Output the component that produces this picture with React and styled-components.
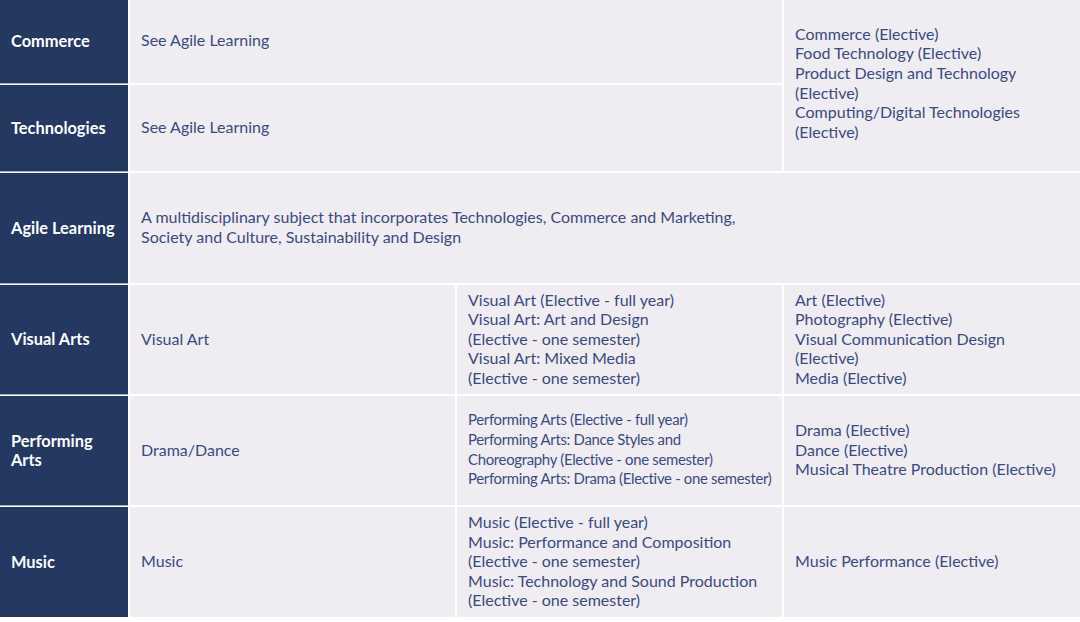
import React from 'react';
import styled, { createGlobalStyle } from 'styled-components';

const GlobalStyle = createGlobalStyle`
  body {
    margin: 0;
    background: #ffffff;
    font-family: Lato, "Open Sans", sans-serif;
  }
`

const Table = styled.div`
  display: grid;
  grid-template-columns: 128px 325px 325px 1fr;
  grid-template-rows: 83px 86px 110px 109px 109px 110px;
  gap: 2px;
  background: #ffffff;
  width: 1080px;
`

const Heading = styled.div`
  background: #243862;
  color: #ffffff;
  font-weight: 700;
  font-size: 16.4px;
  line-height: 19px;
  padding: 0 4px 2px 11px;
  display: flex;
  align-items: center;
  box-shadow: 0 1px 0 #a3abc3;
  grid-row: ${props => props.row};
  grid-column: 1;
`

const Cell = styled.div`
  background: #efedf2;
  color: #3b4a7c;
  font-size: ${props => props.$tight ? '14.9px' : '16px'};
  letter-spacing: ${props => props.$tight ? '-0.3px' : '0'};
  line-height: 19.6px;
  padding: 0 4px ${props => props.$lift || 2}px 11px;
  display: flex;
  align-items: center;
  white-space: nowrap;
  grid-row: ${props => props.row};
  grid-column: ${props => props.col};
`

const Lines = ({ items }) => (
  <div>
    {items.map((t, i) => <div key={i}>{t}</div>)}
  </div>
)

const App = () => {
  return (
    <>
      <GlobalStyle />
      <Table>
        <Heading row="1">Commerce</Heading>
        <Cell row="1" col="2 / span 2" $lift={4}>See Agile Learning</Cell>
        <Cell row="1 / span 2" col="4" $lift={6}>
          <Lines items={[
            'Commerce (Elective)',
            'Food Technology (Elective)',
            'Product Design and Technology',
            '(Elective)',
            'Computing/Digital Technologies',
            '(Elective)'
          ]} />
        </Cell>

        <Heading row="2">Technologies</Heading>
        <Cell row="2" col="2 / span 2">See Agile Learning</Cell>

        <Heading row="3">Agile Learning</Heading>
        <Cell row="3" col="2 / span 3">
          <Lines items={[
            'A multidisciplinary subject that incorporates Technologies, Commerce and Marketing,',
            'Society and Culture, Sustainability and Design'
          ]} />
        </Cell>

        <Heading row="4">Visual Arts</Heading>
        <Cell row="4" col="2">Visual Art</Cell>
        <Cell row="4" col="3">
          <Lines items={[
            'Visual Art (Elective - full year)',
            'Visual Art: Art and Design',
            '(Elective - one semester)',
            'Visual Art: Mixed Media',
            '(Elective - one semester)'
          ]} />
        </Cell>
        <Cell row="4" col="4">
          <Lines items={[
            'Art (Elective)',
            'Photography (Elective)',
            'Visual Communication Design',
            '(Elective)',
            'Media (Elective)'
          ]} />
        </Cell>

        <Heading row="5">Performing<br />Arts</Heading>
        <Cell row="5" col="2">Drama/Dance</Cell>
        <Cell row="5" col="3" $tight>
          <Lines items={[
            'Performing Arts (Elective - full year)',
            'Performing Arts: Dance Styles and',
            'Choreography (Elective - one semester)',
            'Performing Arts: Drama (Elective - one semester)'
          ]} />
        </Cell>
        <Cell row="5" col="4">
          <Lines items={[
            'Drama (Elective)',
            'Dance (Elective)',
            'Musical Theatre Production (Elective)'
          ]} />
        </Cell>

        <Heading row="6">Music</Heading>
        <Cell row="6" col="2">Music</Cell>
        <Cell row="6" col="3">
          <Lines items={[
            'Music (Elective - full year)',
            'Music: Performance and Composition',
            '(Elective - one semester)',
            'Music: Technology and Sound Production',
            '(Elective - one semester)'
          ]} />
        </Cell>
        <Cell row="6" col="4">Music Performance (Elective)</Cell>
      </Table>
    </>
  )
}

export default App;
